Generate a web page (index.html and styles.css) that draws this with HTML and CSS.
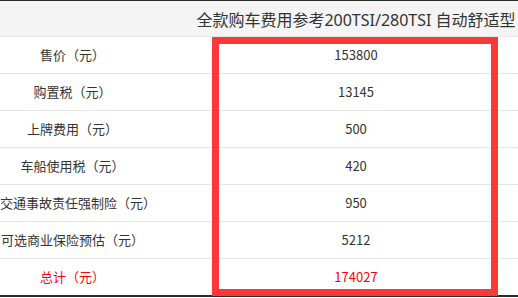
FILE: index.html
```html
<!DOCTYPE html>
<html lang="zh-CN">
<head>
<meta charset="utf-8">
<title>全款购车费用参考</title>
<link rel="stylesheet" href="styles.css">
</head>
<body>
<div class="frame">
  <table class="cost">
    <thead>
      <tr>
        <th class="label"></th>
        <th class="value head">全款购车费用参考200TSI/280TSI 自动舒适型</th>
      </tr>
    </thead>
    <tbody>
      <tr><td class="label">售价（元）</td><td class="value">153800</td></tr>
      <tr><td class="label">购置税（元）</td><td class="value">13145</td></tr>
      <tr><td class="label">上牌费用（元）</td><td class="value">500</td></tr>
      <tr><td class="label">车船使用税（元）</td><td class="value">420</td></tr>
      <tr><td class="label">交通事故责任强制险（元）</td><td class="value">950</td></tr>
      <tr><td class="label">可选商业保险预估（元）</td><td class="value">5212</td></tr>
      <tr class="total"><td class="label">总计（元）</td><td class="value">174027</td></tr>
    </tbody>
  </table>
  <div class="highlight"></div>
</div>
</body>
</html>
```
FILE: styles.css
```css
html, body {
  margin: 0;
  padding: 0;
  background: #fff;
  overflow: hidden;
}
body {
  width: 518px;
  height: 298px;
  font-family: "Noto Sans CJK SC", "Noto Sans", sans-serif;
  color: #333;
  text-spacing-trim: space-all;
}
.frame {
  position: relative;
  width: 518px;
  height: 298px;
  overflow: hidden;
  border-top: 1px solid #2b2b2b;
  box-sizing: border-box;
}
.cost {
  border-collapse: collapse;
  table-layout: fixed;
  width: 567px;
  border-bottom: 2px solid #2b2b2b;
}
.cost th, .cost td {
  padding: 0;
  text-align: center;
  border-bottom: 1px solid #e6e6e6;
  height: 36px;
  white-space: nowrap;
}
.cost .label { width: 145px; font-size: 13px; }
.cost .value { width: 422px; font-size: 13px; }
.cost thead th {
  background: #f4f4f4;
  font-weight: normal;
  height: 35px;
  padding-top: 2px;
  box-sizing: border-box;
}
.cost th.head {
  font-family: "Noto Sans", "Noto Sans CJK SC", sans-serif;
  font-size: 16px;
}
.cost tr.total td { color: #ff0000; }
.highlight {
  position: absolute;
  left: 212px;
  top: 36px;
  width: 286px;
  height: 259px;
  border: 7px solid #fd3838;
  box-sizing: border-box;
}
```
